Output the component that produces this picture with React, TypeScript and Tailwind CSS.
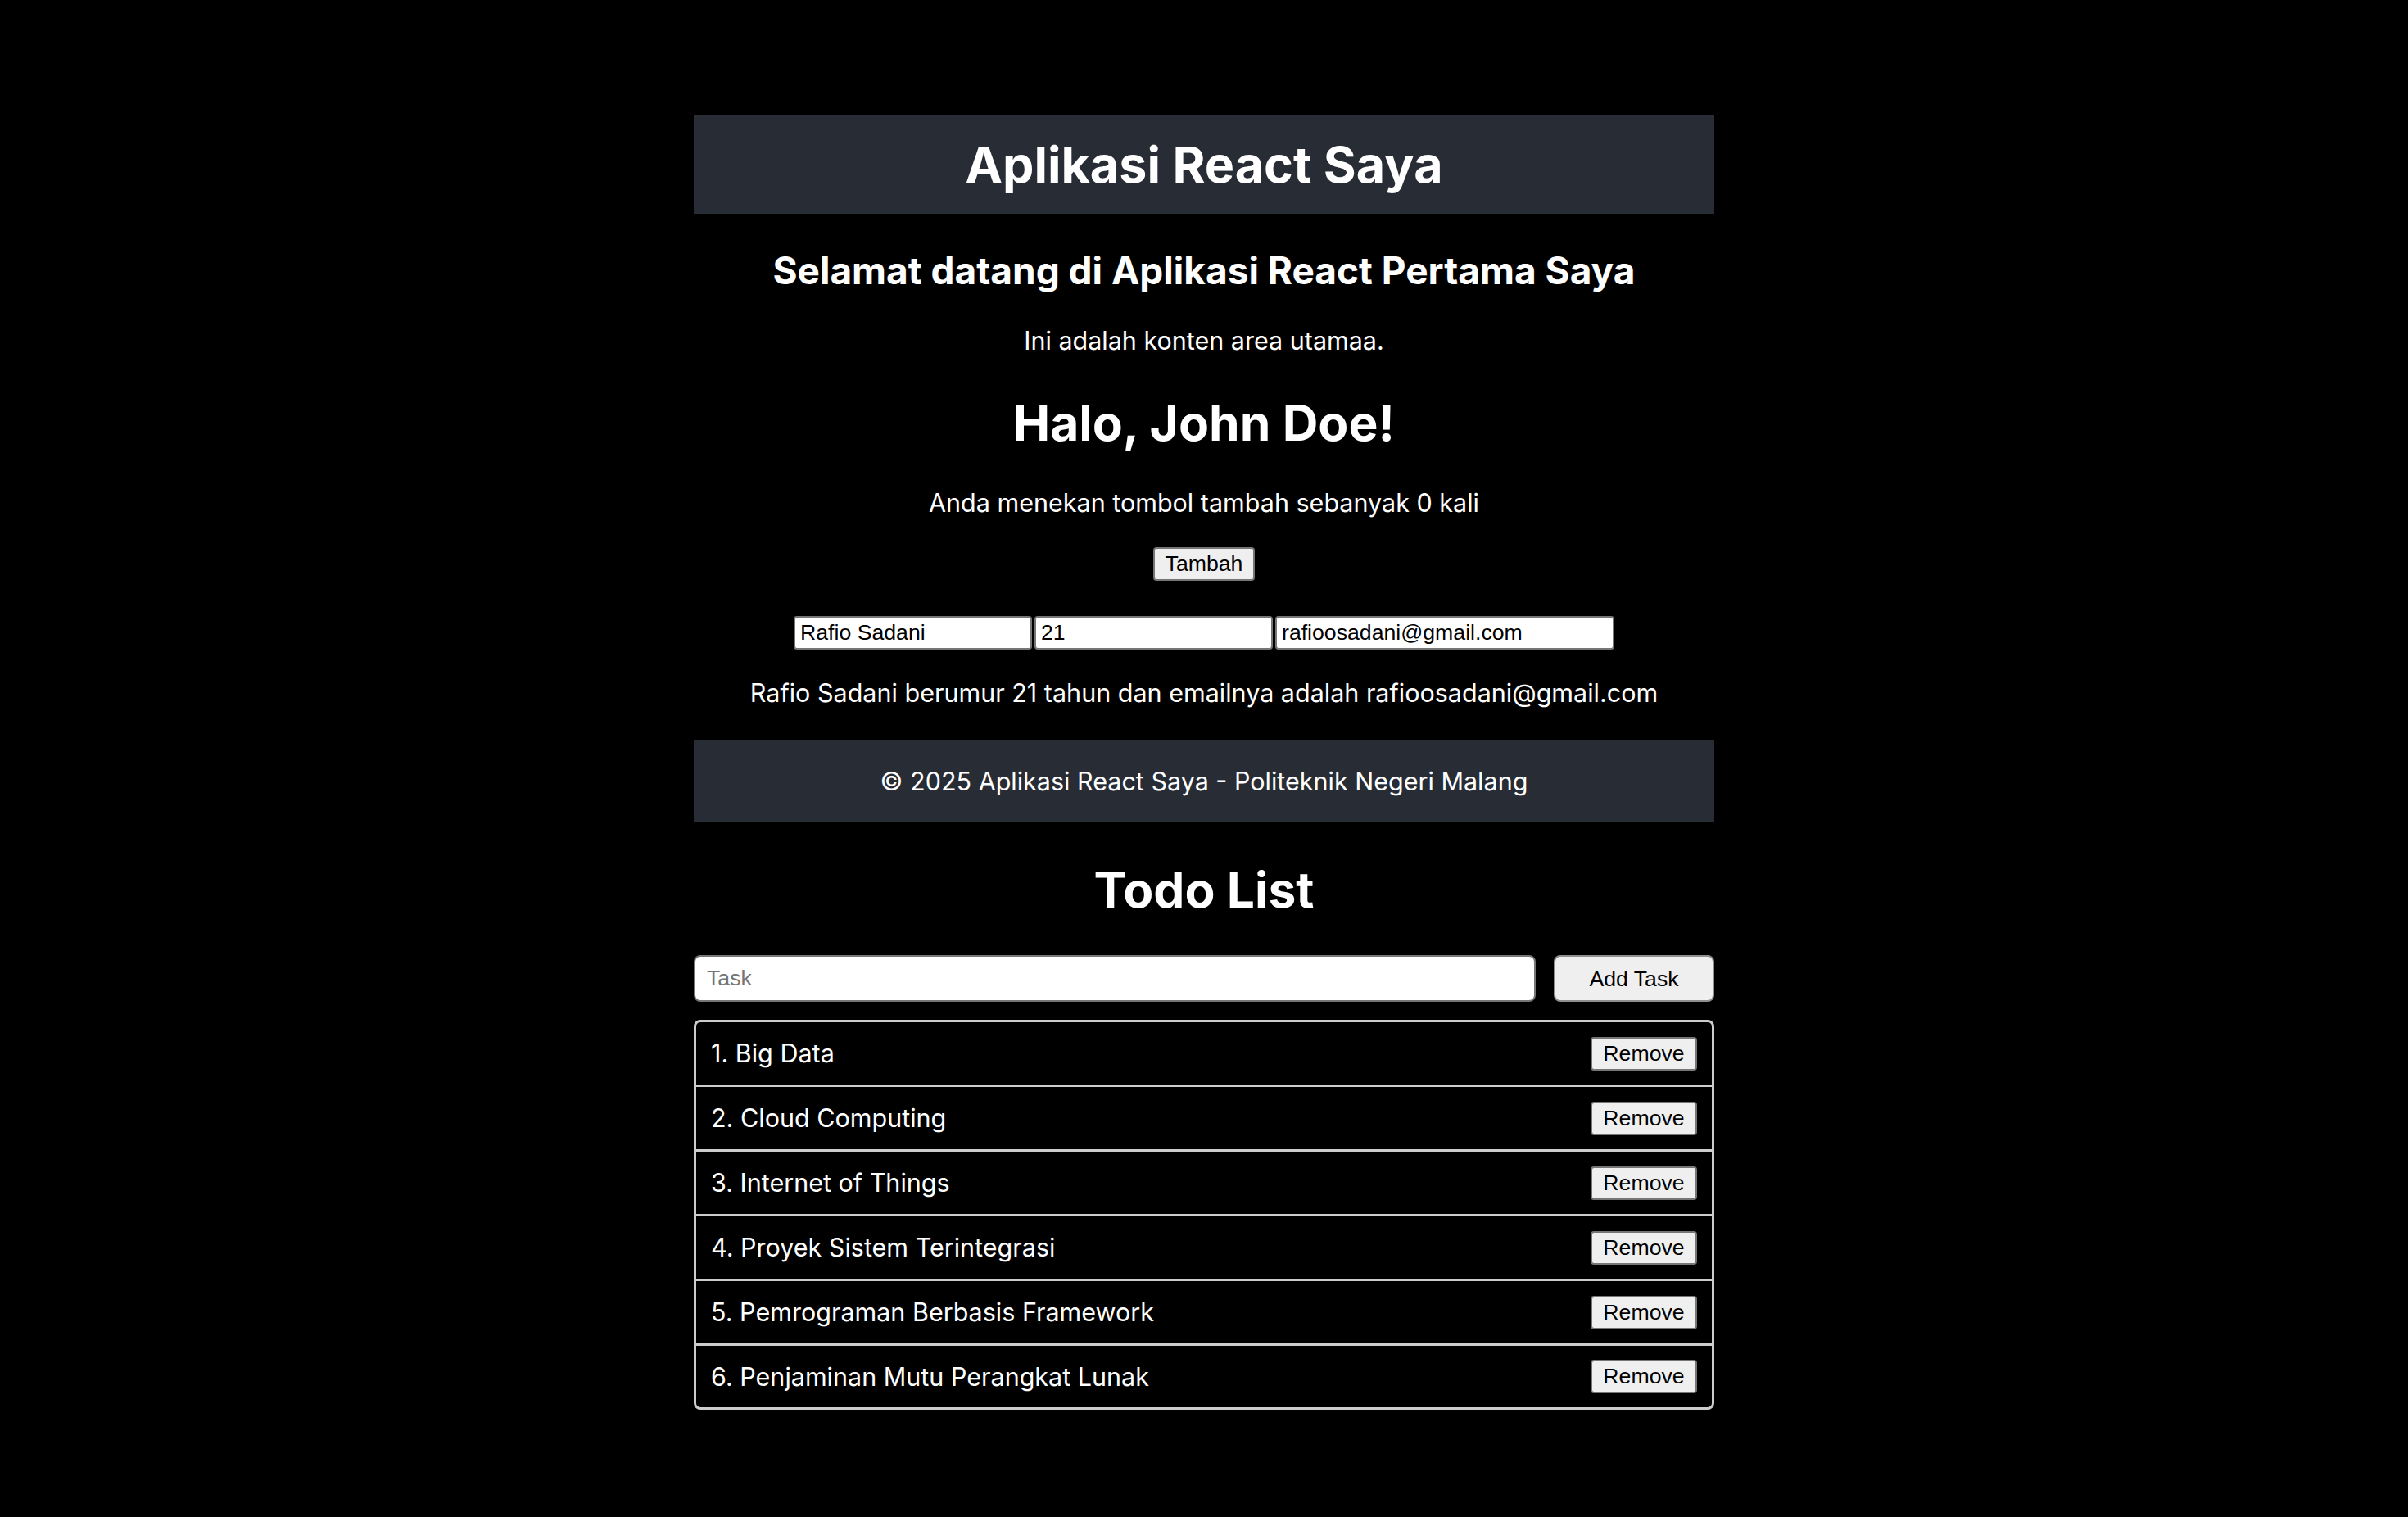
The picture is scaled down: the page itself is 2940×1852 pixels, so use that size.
import React, { useState } from 'react';

const initialTodos = [
  'Big Data',
  'Cloud Computing',
  'Internet of Things',
  'Proyek Sistem Terintegrasi',
  'Pemrograman Berbasis Framework',
  'Penjaminan Mutu Perangkat Lunak',
];

export default function App() {
  const [count, setCount] = useState(0);
  const [name, setName] = useState('Rafio Sadani');
  const [age, setAge] = useState('21');
  const [email, setEmail] = useState('rafioosadani@gmail.com');
  const [task, setTask] = useState('');
  const [todos, setTodos] = useState(initialTodos);

  const addTask = () => {
    if (!task.trim()) return;
    setTodos([...todos, task.trim()]);
    setTask('');
  };

  return (
    <div className="min-h-screen bg-black text-white font-['Inter','Noto_Sans',sans-serif]">
      <div className="mx-auto w-[1246px] pt-[141px] pb-[120px]">
        <header className="h-[120px] bg-[#282c34] flex items-center justify-center">
          <h1 className="text-[61px] leading-[77px] font-bold">Aplikasi React Saya</h1>
        </header>

        <main className="flex flex-col items-center text-center">
          <h2 className="mt-[40px] text-[46px] leading-[58px] font-bold">
            Selamat datang di Aplikasi React Pertama Saya
          </h2>
          <p className="mt-[38px] text-[30.5px] leading-[38px]">Ini adalah konten area utamaa.</p>

          <h1 className="mt-[43px] text-[60.5px] leading-[77px] font-bold">Halo, John Doe!</h1>
          <p className="mt-[40px] text-[30.5px] leading-[38px]">
            Anda menekan tombol tambah sebanyak {count} kali
          </p>
          <button
            onClick={() => setCount(count + 1)}
            className="mt-[35px] h-[41px] w-[124px] bg-[#efefef] text-black border-2 border-[#767676] rounded-[4px] font-['Liberation_Sans',Arial,sans-serif] text-[26.67px] leading-none"
          >
            Tambah
          </button>

          <div className="mt-[43px] flex gap-[3px]">
            <input
              value={name}
              onChange={(e) => setName(e.target.value)}
              className="h-[41px] w-[291px] bg-white text-black border-2 border-[#767676] rounded-[4px] pl-[6px] font-['Liberation_Sans',Arial,sans-serif] text-[26.67px] outline-none"
            />
            <input
              value={age}
              onChange={(e) => setAge(e.target.value)}
              className="h-[41px] w-[291px] bg-white text-black border-2 border-[#767676] rounded-[4px] pl-[6px] font-['Liberation_Sans',Arial,sans-serif] text-[26.67px] outline-none"
            />
            <input
              value={email}
              onChange={(e) => setEmail(e.target.value)}
              className="h-[41px] w-[414px] bg-white text-black border-2 border-[#767676] rounded-[4px] pl-[6px] font-['Liberation_Sans',Arial,sans-serif] text-[26.67px] outline-none"
            />
          </div>

          <p className="mt-[34px] text-[30.5px] leading-[38px]">
            {name} berumur {age} tahun dan emailnya adalah {email}
          </p>
        </main>

        <footer className="mt-[39px] h-[100px] bg-[#282c34] flex items-center justify-center">
          <p className="text-[30.5px] leading-[38px]">© 2025 Aplikasi React Saya - Politeknik Negeri Malang</p>
        </footer>

        <section>
          <h1 className="mt-[44px] text-center text-[60.5px] leading-[77px] font-bold">Todo List</h1>

          <div className="mt-[41px] flex gap-[22px]">
            <input
              value={task}
              onChange={(e) => setTask(e.target.value)}
              placeholder="Task"
              className="flex-1 h-[57px] bg-white text-black border-2 border-[#767676] rounded-[8px] px-[14px] font-['Liberation_Sans',Arial,sans-serif] text-[26.67px] placeholder:text-[#757575] outline-none"
            />
            <button
              onClick={addTask}
              className="w-[196px] h-[57px] bg-[#efefef] text-black border-2 border-[#8f8f8f] rounded-[8px] font-['Liberation_Sans',Arial,sans-serif] text-[26.67px]"
            >
              Add Task
            </button>
          </div>

          <ul className="mt-[22px] border-[3px] border-[#cccccc] rounded-[8px] overflow-hidden">
            {todos.map((t, i) => (
              <li
                key={i}
                className={`flex items-center justify-between px-[18px] ${i < todos.length - 1 ? 'h-[79px] border-b-[3px] border-[#cccccc]' : 'h-[75px]'}`}
              >
                <span className="text-[30.5px] leading-[38px]">
                  {i + 1}. {t}
                </span>
                <button
                  onClick={() => setTodos(todos.filter((_, j) => j !== i))}
                  className="h-[41px] w-[130px] bg-[#efefef] text-black border-2 border-[#767676] rounded-[4px] font-['Liberation_Sans',Arial,sans-serif] text-[26.67px] leading-none"
                >
                  Remove
                </button>
              </li>
            ))}
          </ul>
        </section>
      </div>
    </div>
  );
}
